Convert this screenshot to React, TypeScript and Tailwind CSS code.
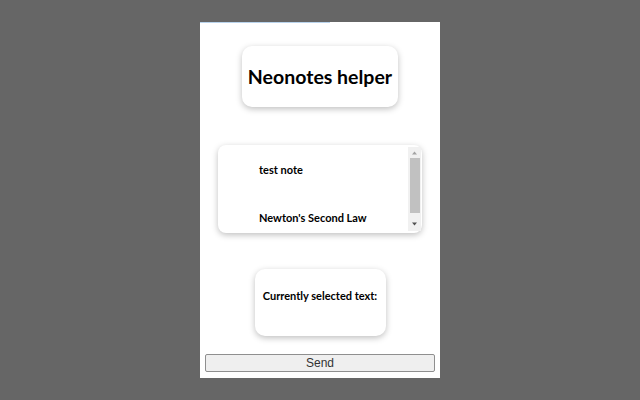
import React from 'react'

const notes = ['test note', "Newton's Second Law"]

const ScrollBar = () => (
    <div className="flex w-[13px] flex-col items-center bg-[#f1f1f1] py-[2px]">
        <svg width="7" height="6" viewBox="0 0 7 6" className="mt-[1px]">
            <path d="M3.5 1.5 L6 4.5 L1 4.5 Z" fill="#a3a3a3" />
        </svg>
        <div className="mt-[2px] h-[55px] w-[10px] bg-[#c1c1c1]" />
        <div className="flex-1" />
        <svg width="7" height="6" viewBox="0 0 7 6" className="mb-[2px]">
            <path d="M1 1.5 L6 1.5 L3.5 4.5 Z" fill="#505050" />
        </svg>
    </div>
)

const App = () => {
    return (
        <div className="flex h-[400px] w-[640px] items-center justify-center bg-[#666666] font-['Lato',sans-serif] text-black">
            <div className="flex h-[356px] w-[240px] flex-col items-center bg-white">
                <div className="h-px w-full">
                    <div className="h-px w-[130px] bg-[#b9d3ec]" />
                </div>

                <div className="mt-[23px] flex h-[61px] w-[156px] items-center justify-center rounded-[10px] bg-white shadow-[0_2px_6px_rgba(0,0,0,0.25)]">
                    <h1 className="whitespace-nowrap text-[19.5px] font-bold leading-none">Neonotes helper</h1>
                </div>

                <div className="mt-[38px] flex h-[88px] w-[204px] rounded-[8px] bg-white py-[2px] pr-[1px] shadow-[0_2px_6px_rgba(0,0,0,0.25)]">
                    <div className="flex flex-1 flex-col gap-[33px] pl-[41px] pt-[15px]">
                        {notes.map((note) => (
                            <p key={note} className="whitespace-nowrap text-[11px] font-bold leading-[15px]">{note}</p>
                        ))}
                    </div>
                    <ScrollBar />
                </div>

                <div className="mt-[36px] flex h-[67px] w-[131px] justify-center rounded-[10px] bg-white pt-[19px] shadow-[0_2px_6px_rgba(0,0,0,0.25)]">
                    <p className="whitespace-nowrap text-[11px] font-bold leading-[15px]">Currently selected text:</p>
                </div>

                <button className="mt-[18px] h-[18px] w-[230px] rounded-[2px] border border-[#8f8f8f] bg-[#efefef] font-['Liberation_Sans',sans-serif] text-[12px] leading-none text-[#333]">
                    Send
                </button>
            </div>
        </div>
    )
}

export default App
